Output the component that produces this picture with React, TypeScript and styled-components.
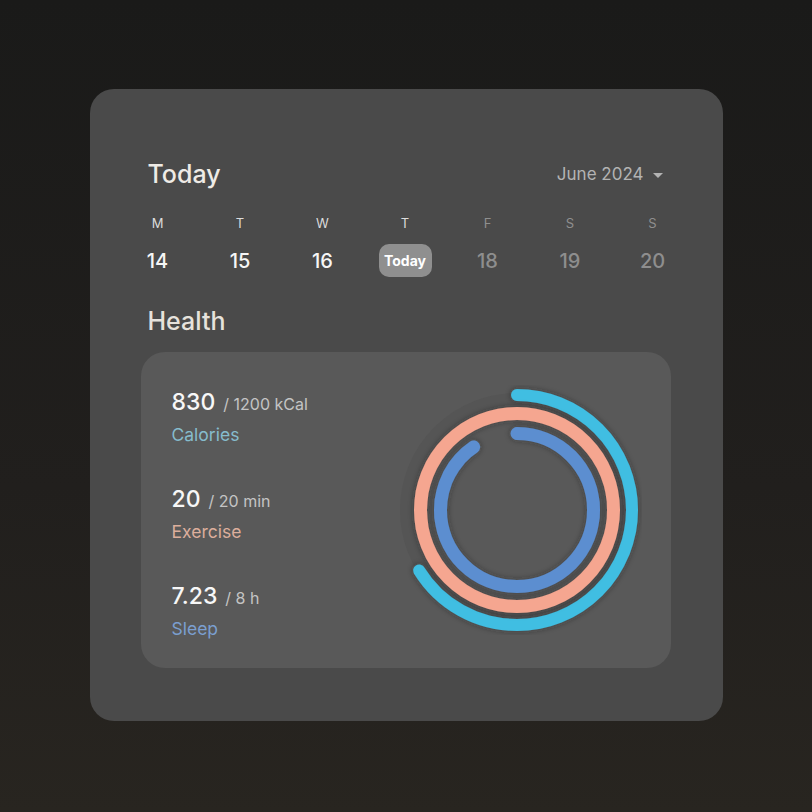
import styled, { createGlobalStyle } from "styled-components";

const GlobalStyle = createGlobalStyle`
  html, body {
    margin: 0;
    padding: 0;
  }
  body {
    font-family: Inter, "Noto Sans", sans-serif;
    background: linear-gradient(180deg, #1a1a19 0%, #211f1d 60%, #282520 100%);
    min-height: 812px;
  }
`;

const Page = styled.div`
  width: 812px;
  height: 812px;
  display: flex;
  align-items: flex-start;
  justify-content: center;
  padding-top: 89px;
  box-sizing: border-box;
`;

const Card = styled.div`
  width: 633px;
  height: 632px;
  box-sizing: border-box;
  background: #4a4a4a;
  border-radius: 24px;
  padding: 70px 52px 0 51px;
  display: flex;
  flex-direction: column;
`;

const Header = styled.div`
  display: flex;
  align-items: center;
  justify-content: space-between;
  padding: 0 8px 0 7px;
`;

const Heading = styled.h2`
  margin: 0;
  font-size: 25px;
  line-height: 30px;
  font-weight: 500;
  color: #eeebe6;
`;

const MonthPicker = styled.div`
  display: flex;
  align-items: center;
  gap: 9px;
  font-size: 17px;
  color: #b3b3b3;
`;

const Caret = styled.span`
  width: 0;
  height: 0;
  border-left: 5px solid transparent;
  border-right: 5px solid transparent;
  border-top: 5px solid #b3b3b3;
  margin-top: 2px;
`;

const Week = styled.div`
  display: flex;
  justify-content: space-between;
  padding: 0 8px 0 7px;
  margin-top: 26px;
`;

const Day = styled.div`
  width: 20px;
  display: flex;
  flex-direction: column;
  align-items: center;
  gap: 13px;
`;

const DayLetter = styled.span<{ $dim?: boolean }>`
  font-size: 13px;
  line-height: 16px;
  color: ${(p) => (p.$dim ? "#8f8f8f" : "#dcdcdc")};
`;

const DateCell = styled.div<{ $dim?: boolean }>`
  height: 33px;
  display: flex;
  align-items: center;
  justify-content: center;
  font-size: 20px;
  font-weight: 500;
  color: ${(p) => (p.$dim ? "#8e8e8e" : "#f6f6f6")};
`;

const TodayPill = styled.span`
  flex: none;
  width: 53px;
  height: 33px;
  border-radius: 10px;
  background: #8f8f8f;
  color: #ffffff;
  font-size: 14px;
  font-weight: 700;
  display: flex;
  align-items: center;
  justify-content: center;
`;

const SectionTitle = styled(Heading)`
  margin: 29px 0 16px 7px;
  color: #e6e2dc;
`;

const Panel = styled.div`
  height: 316px;
  box-sizing: border-box;
  background: #595959;
  border-radius: 24px;
  padding: 0 29px 0 31px;
  display: flex;
  align-items: center;
  justify-content: space-between;
`;

const Stats = styled.div`
  display: flex;
  flex-direction: column;
  gap: 41px;
  margin-top: 8px;
`;

const Stat = styled.div`
  display: flex;
  flex-direction: column;
  gap: 8px;
`;

const Value = styled.div`
  display: flex;
  align-items: baseline;
  gap: 8px;
  font-size: 23px;
  line-height: 26px;
  font-weight: 500;
  color: #f7f7f7;
`;

const Goal = styled.span`
  font-size: 16px;
  font-weight: 400;
  color: #c4c4c4;
`;

const Label = styled.span<{ $color: string }>`
  font-size: 17.5px;
  line-height: 20px;
  color: ${(p) => p.$color};
`;

const days = [
  { d: "M", n: "14" },
  { d: "T", n: "15" },
  { d: "W", n: "16" },
  { d: "T", n: "17", today: true },
  { d: "F", n: "18", dim: true },
  { d: "S", n: "19", dim: true },
  { d: "S", n: "20", dim: true },
];

const stats = [
  { value: "830", goal: "/ 1200 kCal", label: "Calories", color: "#86bccd" },
  { value: "20", goal: "/ 20 min", label: "Exercise", color: "#dcae9c" },
  { value: "7.23", goal: "/ 8 h", label: "Sleep", color: "#7b9fd0" },
];

const rings = [
  { r: 115, w: 12, frac: 238 / 360, color: "#3fbee2" },
  { r: 96.5, w: 13, frac: 1, color: "#f5a690" },
  { r: 76.5, w: 13, frac: 325 / 360, color: "#5b8ed0" },
];

function Rings() {
  return (
    <svg width="250" height="250" viewBox="0 0 250 250">
      <defs>
        <filter id="ringShadow" x="-20%" y="-20%" width="140%" height="140%">
          <feDropShadow dx="0" dy="0" stdDeviation="3" floodColor="#202020" floodOpacity="0.5" />
        </filter>
      </defs>
      <circle cx="125" cy="125" r="110" fill="none" stroke="#555555" strokeWidth="14" />
      {rings.map((ring) => {
        const c = 2 * Math.PI * ring.r;
        return (
          <circle
            key={ring.r}
            cx="125"
            cy="125"
            r={ring.r}
            fill="none"
            stroke={ring.color}
            strokeWidth={ring.w}
            strokeLinecap="round"
            strokeDasharray={ring.frac >= 1 ? undefined : `${c * ring.frac} ${c}`}
            transform="rotate(-90 125 125)"
            filter="url(#ringShadow)"
          />
        );
      })}
    </svg>
  );
}

export default function App() {
  return (
    <>
      <GlobalStyle />
      <Page>
        <Card>
          <Header>
            <Heading>Today</Heading>
            <MonthPicker>
              June 2024
              <Caret />
            </MonthPicker>
          </Header>
          <Week>
            {days.map((day, i) => (
              <Day key={i}>
                <DayLetter $dim={day.dim}>{day.d}</DayLetter>
                <DateCell $dim={day.dim}>
                  {day.today ? <TodayPill>Today</TodayPill> : day.n}
                </DateCell>
              </Day>
            ))}
          </Week>
          <SectionTitle>Health</SectionTitle>
          <Panel>
            <Stats>
              {stats.map((s) => (
                <Stat key={s.label}>
                  <Value>
                    {s.value}
                    <Goal>{s.goal}</Goal>
                  </Value>
                  <Label $color={s.color}>{s.label}</Label>
                </Stat>
              ))}
            </Stats>
            <Rings />
          </Panel>
        </Card>
      </Page>
    </>
  );
}
